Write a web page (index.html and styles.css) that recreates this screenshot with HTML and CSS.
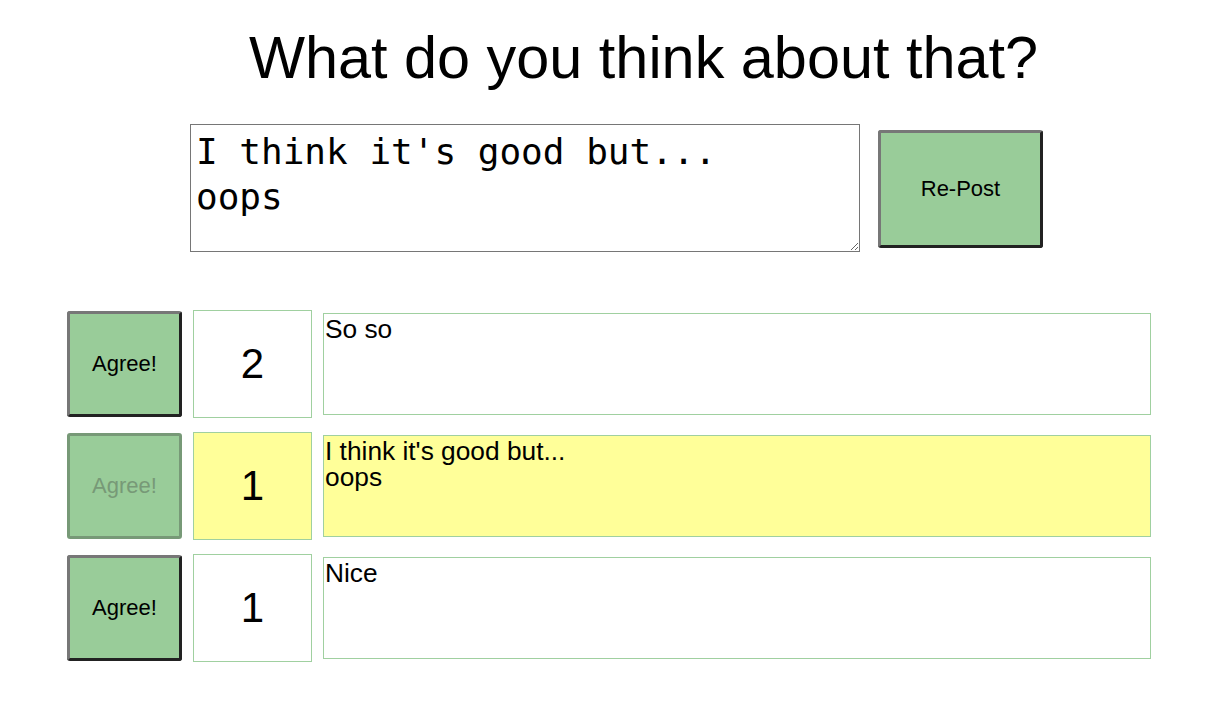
FILE: index.html
```html
<!DOCTYPE html>
<html>
<head>
<meta charset="utf-8">
<link rel="stylesheet" href="styles.css">
</head>
<body>
<div class="page">
  <h1 class="title">What do you think about that?</h1>
  <div class="compose">
    <textarea class="input">I think it's good but...
oops</textarea>
    <button class="btn post">Re-Post</button>
  </div>
  <div class="list">
    <div class="row">
      <button class="btn agree">Agree!</button>
      <div class="count">2</div>
      <div class="comment">So so</div>
    </div>
    <div class="row mine">
      <button class="btn agree" disabled>Agree!</button>
      <div class="count">1</div>
      <div class="comment">I think it's good but...<br>oops</div>
    </div>
    <div class="row">
      <button class="btn agree">Agree!</button>
      <div class="count">1</div>
      <div class="comment">Nice</div>
    </div>
  </div>
</div>
</body>
</html>
```
FILE: styles.css
```css
html, body {
  margin: 0;
  padding: 0;
  background: #ffffff;
}
body {
  font-family: "Liberation Sans", Arial, sans-serif;
  color: #000;
}
.page {
  padding-top: 24px;
}
.title {
  margin: 0;
  padding-left: 76px;
  text-align: center;
  font-size: 59.4px;
  font-weight: normal;
  line-height: 68px;
}
.compose {
  display: flex;
  align-items: center;
  gap: 18px;
  margin-top: 32px;
  padding-left: 190px;
}
.input {
  box-sizing: border-box;
  width: 670px;
  height: 128px;
  margin: 0;
  padding: 4px 5px 0;
  border: 1px solid #767676;
  font-family: "DejaVu Sans Mono", monospace;
  font-size: 36px;
  line-height: 45px;
  color: #000;
  resize: both;
}
.btn {
  box-sizing: border-box;
  margin: 0;
  padding: 0;
  background: #99cc99;
  border: 3px solid;
  border-color: #777777 #222222 #222222 #777777;
  border-radius: 3px;
  font-family: "Liberation Sans", Arial, sans-serif;
  color: #000;
  font-size: 22px;
}
.post {
  width: 165px;
  height: 118px;
  margin-top: 2px;
}
.list {
  display: flex;
  flex-direction: column;
  gap: 14px;
  margin-top: 58px;
  margin-left: 67px;
  width: 1084px;
}
.row {
  display: flex;
  align-items: center;
  gap: 11px;
}
.agree {
  flex: none;
  width: 115px;
  height: 106px;
}
.agree:disabled {
  color: #779977;
  border-color: #779977;
}
.count {
  flex: none;
  box-sizing: border-box;
  width: 119px;
  height: 108px;
  border: 1px solid #a0d0a0;
  display: flex;
  align-items: center;
  justify-content: center;
  font-size: 42px;
  background: #ffffff;
}
.comment {
  flex: 1;
  box-sizing: border-box;
  height: 102px;
  border: 1px solid #a0d0a0;
  padding: 2px 1px 0;
  font-size: 26.3px;
  line-height: 26px;
  background: #ffffff;
}
.mine .count,
.mine .comment {
  background: #ffff99;
}
```
